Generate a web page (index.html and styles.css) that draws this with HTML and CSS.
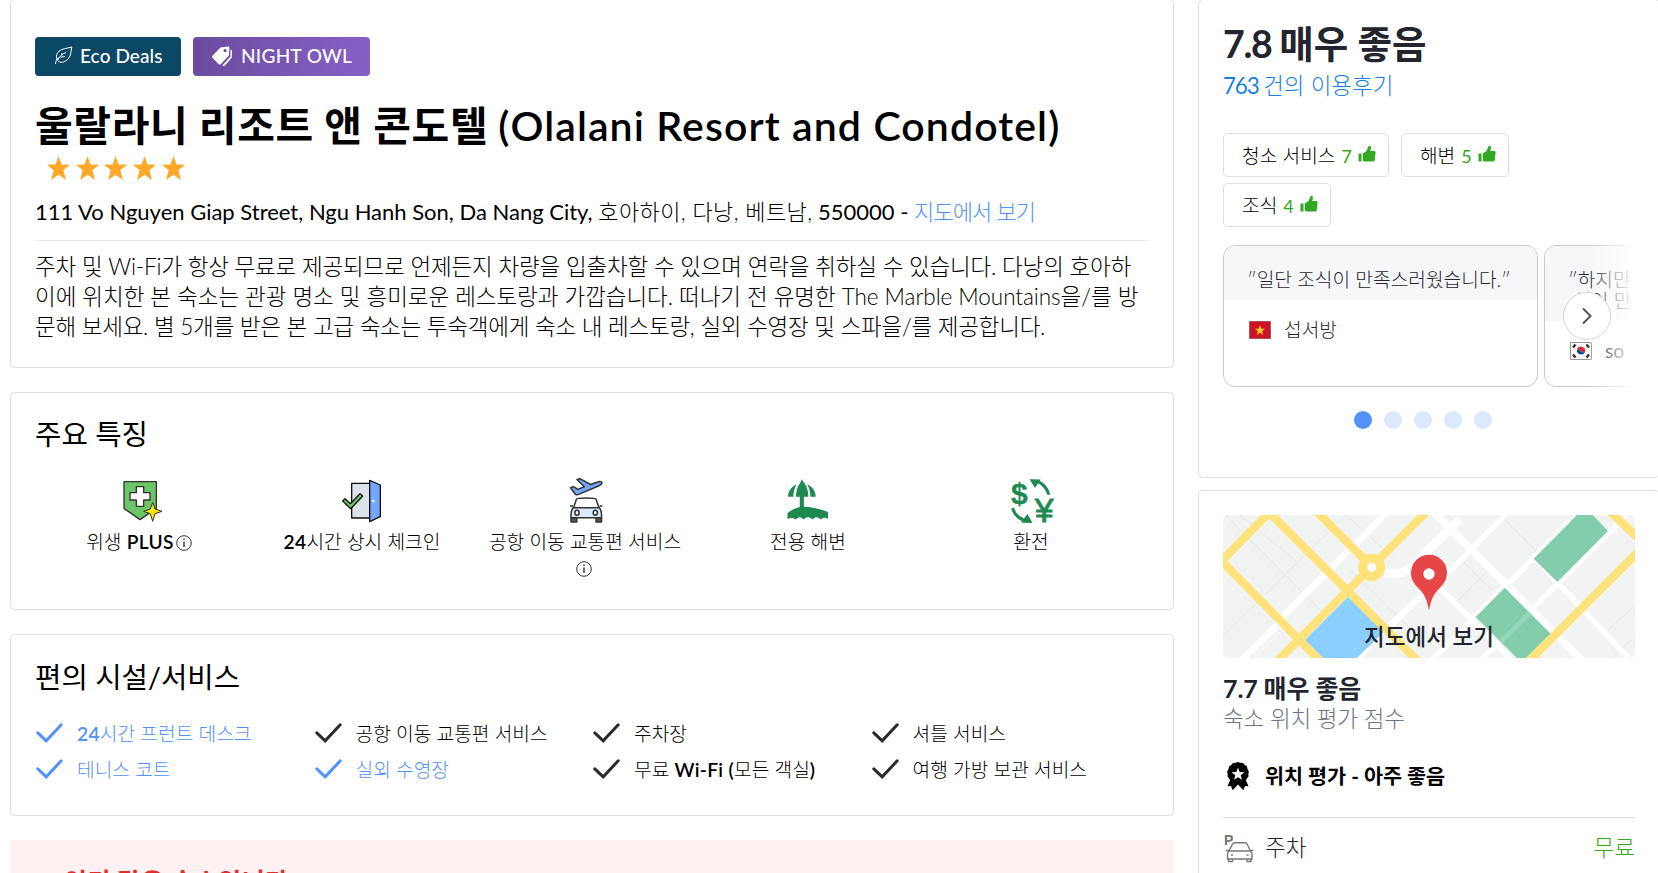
FILE: index.html
```
<!DOCTYPE html>
<html lang="ko">
<head>
  <meta charset="UTF-8">
  <title>울랄라니 리조트 앤 콘도텔</title>
  <link rel="stylesheet" href="styles.css">
</head>
<body>
  <svg class="defs" width="0" height="0">
    <symbol id="star" viewBox="0 0 23 24"><path d="M11.500 0l3 8.400 8.500.3-6.700 5.600L19 24l-7.500-5.300L4 24l2.700-9.700L0 8.700l8.500-.3z"/></symbol>
    <symbol id="check" viewBox="0 0 27 20"><path d="M1.800 9.800l8.400 8L25.200 1.800" fill="none" stroke="currentColor" stroke-width="3" stroke-linecap="round"/></symbol>
    <symbol id="thumb" viewBox="0 0 18 18"><path d="M.5 8.500h3v8h-3zM4.800 8.500L8.500 6l2-4.800C11 .2 13 .5 13 2.200c0 1.300-.5 2.700-.9 3.900h4c1.100 0 1.600.8 1.500 1.700l-.8 6.900c-.1 1.100-.8 1.800-1.800 1.800H7.500c-1.200 0-2.700-.4-2.700-1.500z"/></symbol>
    <symbol id="info" viewBox="0 0 16 16"><circle cx="8" cy="8" r="7.300" fill="none" stroke="#333"/><path d="M8 6.500v5.500M8 3.600v1.500" fill="none" stroke="#222" stroke-width="1.300"/></symbol>
  </svg>

  <div class="page">
    <div class="main">
      <div class="card hotel">
        <div class="badges">
          <div class="badge eco">
            <svg width="19" height="19" viewBox="0 0 19 19" fill="none" stroke="#fff"><path d="M1.500 18c.3-2.800 1-4.600 2.600-6.300M4.500 15.500C1.500 12.500 2 8 5 5.200 8 2.500 13 2.500 17.800 1c-.8 4-.8 8.500-3.500 11.700-2.500 3-7 4.600-9.800 2.800zM4 14c1.500-4 4.500-6.200 8-7.500M8 9.200v-2M6.500 11.200l4.500-.7"/></svg>
            <span>Eco Deals</span>
          </div>
          <div class="badge owl">
            <svg width="21" height="20" viewBox="0 0 21 20" fill="#fff"><path fill-rule="evenodd" d="M8.500 1.500L16 .5c1 0 1.500.6 1.400 1.500l-.5 7.500-8 8.500c-.8.8-1.700.8-2.400 0L.7 12c-.8-.8-.8-1.700 0-2.500zM13 3a1.600 1.600 0 1 0 .1 0z"/><path d="M18.500 3.500l1.600 1-.3 7-6.800 8c-.9.600-1.800.5-2.500-.3l8-8.700z"/></svg>
            <span>NIGHT OWL</span>
          </div>
        </div>
        <h1><span class="t-ko">울랄라니 리조트 앤 콘도텔</span> <span class="t-en">(Olalani Resort and Condotel)</span></h1>
        <div class="stars">
          <svg><use href="#star"/></svg><svg><use href="#star"/></svg><svg><use href="#star"/></svg><svg><use href="#star"/></svg><svg><use href="#star"/></svg>
        </div>
        <div class="address"><span class="a-en">111 Vo Nguyen Giap Street, Ngu Hanh Son, Da Nang City,</span> <span class="a-ko">호아하이, 다낭, 베트남,</span> 550000 - <a>지도에서 보기</a></div>
        <p class="desc">
          <span class="d1">주차 및 Wi-Fi가 항상 무료로 제공되므로 언제든지 차량을 입출차할 수 있으며 연락을 취하실 수 있습니다. 다낭의 호아하</span>
          <span class="d2">이에 위치한 본 숙소는 관광 명소 및 흥미로운 레스토랑과 가깝습니다. 떠나기 전 유명한 The Marble Mountains을/를 방</span>
          <span class="d3">문해 보세요. 별 5개를 받은 본 고급 숙소는 투숙객에게 숙소 내 레스토랑, 실외 수영장 및 스파을/를 제공합니다.</span>
        </p>
      </div>

      <div class="card highlights">
        <h2>주요 특징</h2>
        <div class="features">
          <div class="feature">
            <svg class="pic" viewBox="165 48 144 144"><g stroke="#333" stroke-width="4" stroke-linejoin="round"><path fill="#6bc766" d="M192 65h97v80l-49 34-48-34z"/><path fill="#fff" d="M229 80h22v18h19v22h-19v19h-22v-19h-19V98h19z"/></g><path fill="#ffe600" stroke="#333" stroke-width="3" d="M278 127l7 20 21 7-21 7-7 23-7-23-20-7 20-7z"/></svg>
            <div class="label">위생 <b>PLUS</b><svg class="info"><use href="#info"/></svg></div>
          </div>
          <div class="feature">
            <svg class="pic" viewBox="834 48 144 144" stroke="#111" stroke-width="4" stroke-linejoin="round"><path fill="#dde3ea" d="M875 70h54v104h-54z"/><path fill="#74a7fb" d="M929 61l32 14v95l-32 15z"/><circle cx="940" cy="123" r="4" fill="#fff" stroke="none"/><path fill="#6bc766" d="M848 123l7-7 16 15 29-30 8 7-36 38z"/></svg>
            <div class="label"><b>24</b>시간 상시 체크인</div>
          </div>
          <div class="feature">
            <svg class="pic" viewBox="0 0 48 48" stroke="#333" stroke-width="1.500" stroke-linejoin="round"><path fill="#74a7fb" d="M16 3.500L19 2.700l10.500 5.800 6.500-2.300c3-1.200 5.500-.4 5 1-.3 1.300-1.500 2-3 2.500L17 18.600c-1.500.4-2.400.2-3-.8l-4.500-6 3-1.200 4.300 2.800 6.500-2.600z"/><path fill="#fff" d="M12.500 32l3-9c.5-1.500 19-1.500 19.500 0l3 9z"/><path fill="#dce8fb" d="M12.500 31.700h25.500c2 1.500 2.500 4 2.500 6v4H10v-4c0-2.500.5-4.500 2.500-6z"/><path fill="#555" d="M10 41.700h5.800V46H10zM35 41.700h5.500V46H35z"/><path d="M9 30h3M38.500 30h3"/><ellipse cx="16" cy="36.700" rx="2.100" ry="2.500" fill="#fff"/><ellipse cx="34.300" cy="36.700" rx="2.100" ry="2.500" fill="#fff"/></svg>
            <div class="label">공항 이동 교통편 서비스<br><svg class="info"><use href="#info"/></svg></div>
          </div>
          <div class="feature">
            <svg class="pic" viewBox="0 0 48 48" fill="#1e8a50"><path d="M17.800 3c.6 1.500 1.500 2.800 2.700 4.200 2.700 3.600 3.700 8.500 3.900 13.500h-4.500v10c8 .2 15.500 2 24.100 5.300v7c-2.500-2-5-1-7.500.4-2.500-3-5-3-8 0-3-3-6-3-9 0-2.500-3-5-3-7.500 0-3-1.500-5.500-2-8.500-.2v-6.200c4-3 8-5 12.300-6V20.700h-3.900c.2-5 1.200-9.900 4-13.500C16.600 5.800 17.400 4.500 17.800 3zM12.500 8.500C10.500 12 9.500 16 9.300 20.700H4C4 15.500 7.500 10.200 12.500 8.500zM23.300 8.500c5 1.700 8.400 7 8.400 12.200h-5.300c-.2-4.700-1.100-8.700-3.100-12.200z"/></svg>
            <div class="label">전용 해변</div>
          </div>
          <div class="feature">
            <svg class="pic money" viewBox="0 0 48 48" fill="#1e8a50" stroke="#1e8a50"><text x="4" y="27.500" font-size="30" stroke-width=".3">$</text><text x="28" y="46" font-size="33" class="yen">¥</text><path stroke="none" d="M22.600 3.300l11 .2-5.600 8.500zM25.500 46.900l-11.500-.4 6.500-8.500z"/><path fill="none" stroke-width="3.200" stroke-linecap="round" d="M29 5.300q9 2 12.300 12M19 45q-10-3-13-11.500"/></svg>
            <div class="label">환전</div>
          </div>
        </div>
      </div>

      <div class="card facilities">
        <h2>편의 시설/서비스</h2>
        <div class="items">
          <div class="item link"><svg><use href="#check"/></svg><span><b>24</b>시간 프런트 데스크</span></div>
          <div class="item"><svg><use href="#check"/></svg><span>공항 이동 교통편 서비스</span></div>
          <div class="item"><svg><use href="#check"/></svg><span>주차장</span></div>
          <div class="item"><svg><use href="#check"/></svg><span>셔틀 서비스</span></div>
          <div class="item link"><svg><use href="#check"/></svg><span>테니스 코트</span></div>
          <div class="item link"><svg><use href="#check"/></svg><span>실외 수영장</span></div>
          <div class="item"><svg><use href="#check"/></svg><span>무료 <b>Wi-Fi (</b>모든 객실<b>)</b></span></div>
          <div class="item"><svg><use href="#check"/></svg><span>여행 가방 보관 서비스</span></div>
        </div>
      </div>

      <div class="alert">인기 많은 숙소입니다</div>
    </div>

    <div class="side">
      <div class="card reviews">
        <div class="score"><span class="num">7.8 </span>매우 좋음</div>
        <a class="count"><span class="num">763 </span>건의 이용후기</a>
        <div class="chips">
          <div class="chip">청소 서비스 <em>7</em><svg><use href="#thumb"/></svg></div>
          <div class="chip">해변 <em>5</em><svg><use href="#thumb"/></svg></div>
          <div class="chip">조식 <em>4</em><svg><use href="#thumb"/></svg></div>
        </div>
        <div class="carousel">
          <div class="review">
            <div class="quote">″일단 조식이 만족스러웠습니다.″</div>
            <div class="who">
              <svg width="22" height="18" viewBox="0 0 22 18"><path fill="#ce1126" stroke="#a55" d="M.5.5h21v17H.5z"/><path fill="#ffc72c" d="M11 4l1.300 3.700 3.900.1-3.100 2.400 1.100 3.800L11 11.800 7.800 14l1.100-3.800-3.100-2.400 3.900-.1z"/></svg>
              <span>섭서방</span>
            </div>
          </div>
          <div class="review">
            <div class="quote">″하지만<br>&nbsp;석이 만족</div>
            <div class="who">
              <svg width="22" height="18" viewBox="0 0 22 18"><path fill="#fff" stroke="#999" d="M.5.5h21v17H.5z"/><path fill="#cd2e3a" d="M6.800 8a4.300 4.300 0 0 1 8.500 1c-1 2-3 1.500-4.300.4C9.500 8 8 7.500 6.800 8z"/><path fill="#0047a0" d="M6.800 8c1.200-.5 2.700 0 4.200 1.400 1.300 1.100 3.300 1.600 4.300-.4A4.300 4.300 0 0 1 6.800 8z"/><path stroke="#333" stroke-width="2.500" d="M3 5.500l2.500-3M16.500 2.500l2.500 3M3 12.500l2.500 3M16.500 15.500l2.500-3"/></svg>
              <span class="latin">so</span>
            </div>
          </div>
          <div class="fade"></div>
          <div class="next"><svg width="12" height="18" viewBox="0 0 12 18"><path d="M2 1.500L9.500 9 2 16.500" fill="none" stroke="#555" stroke-width="2"/></svg></div>
        </div>
        <div class="dots"><i class="on"></i><i></i><i></i><i></i><i></i></div>
      </div>

      <div class="card location">
        <div class="map">
          <svg width="412" height="143" viewBox="99 105 1236 429" fill="none">
            <path fill="#f2f4f4" d="M99 105h1236v429H99z"/>
            <g stroke="#ebecec" stroke-width="5"><path d="M105 105l290 290M150 105l170 140M99 468l370-365M470 105l140 130M940 115l110 110M480 270l160 155M815 240l90 90M785 380l110-110M590 380l110 100M1335 375l-80 75M1335 470l-70 64"/></g>
            <g stroke="#fff"><path stroke-width="19" d="M590 98L270 418M150 545l130-128M490 545l290-282"/><path stroke-width="22" d="M715 80l465 465"/><path stroke-width="26" d="M570 274c75 24 105-20 135-55l105-100"/><path stroke-width="16" d="M960 90L720 335M740 315l250 250M720 545l420-420M870 545l440-440M1030 230l290 310"/></g>
            <path fill="#8acfff" d="M476 349l108 105-84 80H399l-54-54z"/>
            <g fill="#84cdac"><path d="M1161 105h47l46 48-152 153-71-70zM944 323l138 138-74 73h-27L857 411z"/></g>
            <path stroke="#95d8ba" stroke-width="14" d="M1020 398l-88 88"/>
            <g stroke="#ffe279" stroke-width="25"><path d="M240 95L97 240M85 233l310 315M232 92l460 460M375 90l170 170M545 260L265 540M560 245L715 90M1345 215L1015 545M1255 90l90 85"/></g>
            <circle cx="545" cy="262" r="27" fill="#fff" stroke="#ffe279" stroke-width="27"/>
            <path fill="#e64646" fill-rule="evenodd" d="M717 392c-5-30-12-48-30-66-16-16-24-29-24-48a54 54 0 0 1 108 0c0 19-8 32-24 48-18 18-25 36-30 66z"/>
            <circle cx="717" cy="282" r="17" fill="#fff"/>
          </svg>
          <span>지도에서 보기</span>
        </div>
        <div class="loc-score">7.7 매우 좋음</div>
        <div class="loc-sub">숙소 위치 평가 점수</div>
        <div class="award">
          <svg width="24" height="29" viewBox="0 0 24 29"><path d="M12 0l2.300.8 2.600.3 1.900 1.900 2.100 1.600.6 2.500L22.800 9.500l-.4 2.500.1 2.500-1.600 2-1 1.800 2.600 6-3.500-.3-1.600 4.300L12 22.500l-5.400 5.800L5 24l-3.500.3 2.600-6-1-1.800-1.600-2 .1-2.500-.4-2.500L2.500 7.100l.6-2.500L5.200 3l1.900-1.900 2.600-.3z"/><path fill="#fff" d="M12 5.500l1.700 4.500 4.800.2-3.800 3 1.300 4.600-4-2.600-4 2.600 1.300-4.600-3.800-3 4.800-.2z"/></svg>
          <span>위치 평가 - 아주 좋음</span>
        </div>
        <div class="parking">
          <svg width="30" height="29" viewBox="0 0 30 29" fill="none" stroke="#777" stroke-width="1.400"><text x="0" y="11" class="p">P</text><path d="M5 17l3.500-7c.4-.9 1-1.300 2-1.300h10.500c1 0 1.600.4 2 1.300l3.500 7M2 16.500h3M26.500 16.500h3M5 17h21.500c1 .8 1.500 2 1.500 3.500v4.500H3.500v-4.500C3.500 19 4 17.800 5 17zM4.500 25v2.500h4V25M23 25v2.500h4V25M7 21h2M22.500 21h2"/></svg>
          <span>주차</span>
          <span class="free">무료</span>
        </div>
      </div>
    </div>
  </div>
</body>
</html>
```

FILE: styles.css
```
* {
  box-sizing: border-box;
}

html, body {
  margin: 0;
  padding: 0;
  height: 100%;
  overflow: hidden;
  background-color: white;
  color: #000;
  font-family: Lato, "Noto Sans CJK KR", sans-serif;
  white-space: nowrap;
}

.defs {
  position: absolute;
}

svg {
  display: block;
  flex: none;
}

.page {
  display: flex;
  gap: 24px;
  width: 1660px;
  height: 874px;
  margin: -1px 0 0 10px;
}

.main {
  width: 1164px;
  display: flex;
  flex-direction: column;
  gap: 24px;
}

.side {
  width: 462px;
  display: flex;
  flex-direction: column;
  gap: 12px;
}

.card {
  flex: none;
  border: 1px solid #dddfe2;
  border-radius: 5px;
  padding: 0 24px;
}

/* hotel header */
.hotel {
  height: 369px;
  padding-top: 37px;
}

.badges {
  display: flex;
  gap: 12px;
}

.badge {
  height: 39px;
  padding-bottom: 2px;
  border-radius: 4px;
  color: white;
  font-size: 19px;
  font-weight: 500;
  display: flex;
  align-items: center;
}

.eco {
  width: 146px;
  padding-left: 19px;
  gap: 7px;
  letter-spacing: .1px;
  background-color: #0a4866;
}

.owl {
  width: 177px;
  padding-left: 19px;
  gap: 8px;
  letter-spacing: .3px;
  background: linear-gradient(90deg, #6b4c9f, #8760c7);
}

h1 {
  margin: 26px 0 0;
  font-size: 41px;
  line-height: 48px;
  font-weight: bold;
}

.t-ko {
  letter-spacing: .6px;
}

.t-en {
  font-weight: 600;
  letter-spacing: 1.100px;
}

.stars {
  display: flex;
  gap: 5.700px;
  margin: 6px 0 0 12px;
}

.stars svg {
  width: 23px;
  height: 24px;
  fill: #ffa726;
}

.address {
  margin-top: 17px;
  padding-bottom: 13px;
  border-bottom: 1px solid #e6e7e9;
  font-size: 22px;
  line-height: 30px;
}

.a-ko {
  font-weight: 300;
  letter-spacing: .4px;
}

.address a {
  font-weight: 300;
  letter-spacing: -.9px;
  color: #5392f9;
}

.desc {
  margin: 11px 0 0;
  font-size: 22.500px;
  line-height: 30px;
  font-weight: 300;
}

.desc span {
  display: block;
}

.d1 {
  letter-spacing: -.19px;
}

.d2 {
  letter-spacing: -.05px;
}

.d3 {
  letter-spacing: -.25px;
}

/* features */
h2 {
  margin: 0;
  font-size: 28.700px;
  line-height: 36px;
  font-weight: 400;
}

.highlights {
  height: 218px;
  padding-top: 23px;
}

.features {
  display: grid;
  grid-template-columns: repeat(5, 223px);
  margin: 24px 0 0 -8px;
}

.feature {
  display: flex;
  flex-direction: column;
  align-items: center;
}

.pic {
  width: 48px;
  height: 48px;
}

.money {
  font-family: "Liberation Sans", sans-serif;
  font-weight: bold;
}

.yen {
  font-weight: normal;
}

.label {
  margin: 5px 0 0 1px;
  font-size: 19.200px;
  line-height: 26px;
  font-weight: 300;
  text-align: center;
}

.info {
  display: inline-block;
  width: 16px;
  height: 16px;
  margin-left: 2px;
  vertical-align: -2px;
}

br + .info {
  margin: 0 2px 0 0;
}

.facilities {
  height: 182px;
  padding-top: 24px;
}

.items {
  display: grid;
  grid-template-columns: repeat(4, 278.500px);
  grid-auto-rows: 36px;
  margin-top: 20px;
}

.item {
  display: flex;
  align-items: center;
  gap: 14px;
  padding-left: 1px;
  font-size: 19.200px;
  font-weight: 300;
}

.item svg {
  width: 27px;
  height: 20px;
  color: #2a2a2e;
}

.item.link, .item.link svg {
  color: #5392f9;
}

b {
  font-weight: 600;
  letter-spacing: .3px;
}

.alert {
  flex: none;
  height: 34px;
  padding: 24px 0 0 54px;
  border-radius: 5px 5px 0 0;
  background-color: #fdf2f1;
  color: #e12d2d;
  font-size: 25px;
  line-height: 34px;
  letter-spacing: .5px;
  font-weight: bold;
  overflow: hidden;
}

/* reviews */
.reviews {
  height: 479px;
  padding-top: 21px;
}

.score {
  font-size: 37.500px;
  line-height: 46px;
  font-weight: bold;
  color: #23252e;
}

.score .num {
  letter-spacing: -1.300px;
}

.count {
  display: block;
  margin-top: 4px;
  font-size: 22.500px;
  line-height: 30px;
  font-weight: 300;
  color: #1b7fe0;
}

.count .num {
  font-weight: 400;
  letter-spacing: -1.200px;
}

.num {
  white-space: pre;
}

.chips {
  display: flex;
  flex-wrap: wrap;
  gap: 6px 12px;
  width: 330px;
  margin-top: 32px;
}

.chip {
  height: 44px;
  padding: 0 12px 0 18px;
  border: 1px solid #dddfe2;
  border-radius: 5px;
  display: flex;
  align-items: center;
  font-size: 19.200px;
  font-weight: 300;
}

.chip em {
  margin: 2px 0 0 6px;
  font-size: 18px;
  font-style: normal;
  font-weight: 400;
  color: #32a923;
}

.chip svg {
  width: 18px;
  height: 18px;
  margin: -3px 0 0 6px;
  fill: #32a923;
}

.carousel {
  position: relative;
  display: flex;
  gap: 6px;
  height: 142px;
  margin-top: 18px;
  width: 412px;
  overflow: hidden;
}

.review {
  flex: none;
  width: 315px;
  height: 142px;
  border: 1px solid #c8cacd;
  border-radius: 12px;
  overflow: hidden;
  font-size: 19.200px;
  font-weight: 300;
  color: #23252e;
}

.quote {
  padding: 23px 23px 10px;
  line-height: 21px;
  background-color: #f7f7fa;
}

.who {
  display: flex;
  align-items: center;
  gap: 13px;
  padding: 16px 25px;
  line-height: 28px;
}

.latin {
  font-weight: 400;
}

.fade {
  position: absolute;
  top: 0;
  right: 0;
  width: 48px;
  height: 142px;
  background: linear-gradient(90deg, rgba(255,255,255,0), #fff);
}

.next {
  position: absolute;
  left: 340px;
  top: 47px;
  width: 48px;
  height: 48px;
  border: 1px solid #d5d7da;
  border-radius: 50%;
  background-color: white;
  display: flex;
  align-items: center;
  justify-content: center;
}

.dots {
  display: flex;
  gap: 12px;
  margin: 24px 0 0 131px;
}

.dots i {
  width: 18px;
  height: 18px;
  border-radius: 50%;
  background-color: #dce9fd;
}

.dots .on {
  background-color: #5392f9;
}

/* location */
.location {
  height: 384px;
  padding-top: 24px;
  border-bottom: none;
  border-radius: 5px 5px 0 0;
}

.map {
  position: relative;
  width: 412px;
  height: 143px;
  border-radius: 5px;
  overflow: hidden;
}

.map span {
  position: absolute;
  left: 0;
  right: 0;
  bottom: 6px;
  text-align: center;
  font-size: 22.500px;
  line-height: 30px;
  font-weight: 500;
  color: #23252e;
}

.loc-score {
  margin-top: 14px;
  font-size: 25px;
  line-height: 32px;
  letter-spacing: -.1px;
  font-weight: bold;
  color: #23252e;
}

.loc-sub {
  font-size: 22.500px;
  line-height: 30px;
  letter-spacing: -.2px;
  font-weight: 300;
  color: #6b7488;
}

.award {
  display: flex;
  align-items: center;
  gap: 15px;
  margin-top: 24px;
  padding: 3px 0 26px 3px;
  border-bottom: 1px solid #dddfe2;
  font-size: 20.700px;
  line-height: 30px;
  font-weight: bold;
}

.parking {
  display: flex;
  align-items: center;
  gap: 11px;
  width: 412px;
  padding: 15px 0 0 1px;
  font-size: 22.500px;
  line-height: 30px;
  font-weight: 300;
  color: #23252e;
}

.parking .free {
  margin-left: auto;
  color: #32a923;
}

.p {
  font: bold 14px "Liberation Sans", sans-serif;
  fill: #777;
  stroke: none;
}
```
